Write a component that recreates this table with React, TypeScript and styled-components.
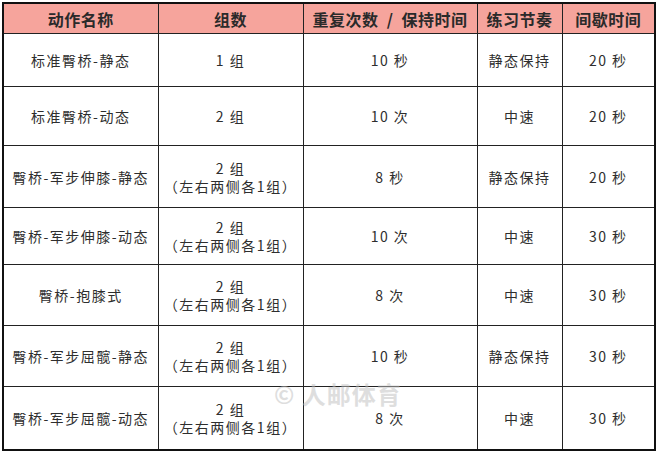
import React from "react";
import styled, { createGlobalStyle } from "styled-components";

const Global = createGlobalStyle`
  html, body { margin: 0; padding: 0; background: #ffffff; }
  body { font-family: "Noto Sans CJK SC", "Noto Sans", sans-serif; color: #2b2b2b; }
`;

const Page = styled.div`
  position: relative;
  padding: 2px 0 0 2px;
  width: 656px;
  height: 456px;
  box-sizing: border-box;
  overflow: hidden;
`;

const Table = styled.table`
  border-collapse: collapse;
  table-layout: fixed;
  width: 652px;
  border: 2px solid #111;
`;

const HeadCell = styled.th`
  background: #f6a49c;
  border: 1px solid #222;
  height: 29px;
  padding: 0;
  font-size: 16px;
  font-weight: 700;
  color: #2a2a2a;
  text-align: center;
  white-space: pre;
  letter-spacing: 0.5px;
`;

const Row = styled.tr<{ $h: number }>`
  height: ${(p) => p.$h}px;
`;

const Cell = styled.td`
  border: 1px solid #222;
  padding: 0;
  font-size: 14px;
  line-height: 18px;
  color: #2e2e2e;
  text-align: center;
  white-space: pre;
  letter-spacing: 1.5px;
`;

const Line = styled.span`
  display: block;
  line-height: 18px;
`;

const Watermark = styled.div`
  position: absolute;
  left: 274px;
  top: 376px;
  font-size: 24px;
  font-weight: 700;
  color: rgba(190, 190, 190, 0.5);
  letter-spacing: 1px;
  pointer-events: none;
`;

type RowData = {
  name: string;
  sets: string;
  split?: boolean;
  reps: string;
  tempo: string;
  rest: string;
  h: number;
};

const rows: RowData[] = [
  { name: "标准臀桥-静态", sets: "1 组", reps: "10 秒", tempo: "静态保持", rest: "20 秒", h: 53 },
  { name: "标准臀桥-动态", sets: "2 组", reps: "10 次", tempo: "中速", rest: "20 秒", h: 59 },
  { name: "臀桥-军步伸膝-静态", sets: "2 组", split: true, reps: "8 秒", tempo: "静态保持", rest: "20 秒", h: 62 },
  { name: "臀桥-军步伸膝-动态", sets: "2 组", split: true, reps: "10 次", tempo: "中速", rest: "30 秒", h: 57 },
  { name: "臀桥-抱膝式", sets: "2 组", split: true, reps: "8 次", tempo: "中速", rest: "30 秒", h: 61 },
  { name: "臀桥-军步屈髋-静态", sets: "2 组", split: true, reps: "10 秒", tempo: "静态保持", rest: "30 秒", h: 61 },
  { name: "臀桥-军步屈髋-动态", sets: "2 组", split: true, reps: "8 次", tempo: "中速", rest: "30 秒", h: 63 },
];

export default function App() {
  return (
    <>
      <Global />
      <Page>
        <Table>
          <colgroup>
            <col style={{ width: 155 }} />
            <col style={{ width: 145 }} />
            <col style={{ width: 174 }} />
            <col style={{ width: 85 }} />
            <col style={{ width: 93 }} />
          </colgroup>
          <thead>
            <tr>
              <HeadCell>动作名称</HeadCell>
              <HeadCell>组数</HeadCell>
              <HeadCell>{"重复次数  /  保持时间"}</HeadCell>
              <HeadCell>练习节奏</HeadCell>
              <HeadCell>间歇时间</HeadCell>
            </tr>
          </thead>
          <tbody>
            {rows.map((r, i) => (
              <Row key={i} $h={r.h}>
                <Cell>{r.name}</Cell>
                <Cell>
                  <Line>{r.sets}</Line>
                  {r.split && <Line>（左右两侧各1组）</Line>}
                </Cell>
                <Cell>{r.reps}</Cell>
                <Cell>{r.tempo}</Cell>
                <Cell>{r.rest}</Cell>
              </Row>
            ))}
          </tbody>
        </Table>
        <Watermark>© 人邮体育</Watermark>
      </Page>
    </>
  );
}
